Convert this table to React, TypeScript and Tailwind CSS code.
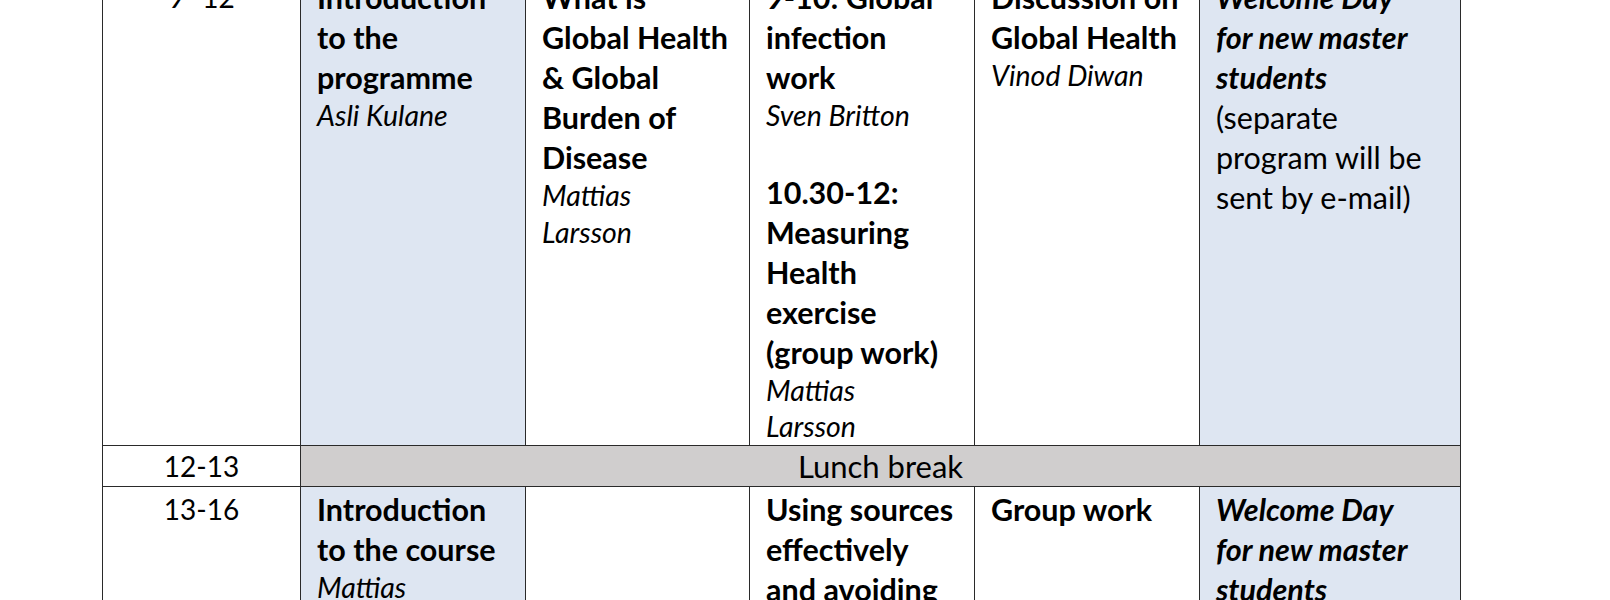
import React from "react";

type Line = { t: string; k: "b" | "i" | "bi" | "r" | "gap" };

const blue = "bg-[#dee6f2]";

function Cell({ lines, shaded, top }: { lines: Line[]; shaded?: boolean; top: string }) {
    return (
        <td className={`border border-[#2a2a2a] align-top ${top} pb-0 pl-[16px] pr-[6px] ${shaded ? blue : "bg-white"}`}>
            {lines.map((l, i) => {
                if (l.k === "gap") return <div key={i} className="h-[38px]" />;
                if (l.k === "i")
                    return (
                        <div key={i} className="italic font-normal text-[28.5px] leading-[36.5px] whitespace-nowrap">
                            {l.t}
                        </div>
                    );
                return (
                    <div
                        key={i}
                        className={`text-[30.5px] leading-[40px] whitespace-nowrap ${l.k === "r" ? "font-normal" : "font-bold"} ${l.k === "bi" ? "italic" : ""}`}
                    >
                        {l.t}
                    </div>
                );
            })}
        </td>
    );
}

const b = (t: string): Line => ({ t, k: "b" });
const it = (t: string): Line => ({ t, k: "i" });
const bi = (t: string): Line => ({ t, k: "bi" });
const r = (t: string): Line => ({ t, k: "r" });
const gap: Line = { t: "", k: "gap" };

export default function App() {
    return (
        <div className="h-[600px] w-[1610px] overflow-hidden bg-white text-black font-['Lato',sans-serif]">
            <table className="-mt-[28px] ml-[102px] border-collapse table-fixed w-[1358px]">
                <colgroup>
                    <col className="w-[198px]" />
                    <col className="w-[225px]" />
                    <col className="w-[224px]" />
                    <col className="w-[225px]" />
                    <col className="w-[225px]" />
                    <col className="w-[261px]" />
                </colgroup>
                <tbody>
                    <tr>
                        <td className="border border-[#2a2a2a] align-top pt-[4px] text-center text-[28px] leading-[40px] bg-white">
                            9 -12
                        </td>
                        <Cell top="pt-[4px]" shaded lines={[b("Introduction"), b("to the"), b("programme"), it("Asli Kulane")]} />
                        <Cell
                            top="pt-[4px]"
                            lines={[
                                b("What is"),
                                b("Global Health"),
                                b("& Global"),
                                b("Burden of"),
                                b("Disease"),
                                it("Mattias"),
                                it("Larsson"),
                            ]}
                        />
                        <Cell
                            top="pt-[4px]"
                            lines={[
                                b("9-10: Global"),
                                b("infection"),
                                b("work"),
                                it("Sven Britton"),
                                gap,
                                b("10.30-12:"),
                                b("Measuring"),
                                b("Health"),
                                b("exercise"),
                                b("(group work)"),
                                it("Mattias"),
                                it("Larsson"),
                            ]}
                        />
                        <Cell top="pt-[4px]" lines={[b("Discussion on"), b("Global Health"), it("Vinod Diwan")]} />
                        <Cell
                            top="pt-[4px]"
                            shaded
                            lines={[
                                bi("Welcome Day"),
                                bi("for new master"),
                                bi("students"),
                                r("(separate"),
                                r("program will be"),
                                r("sent by e-mail)"),
                            ]}
                        />
                    </tr>
                    <tr>
                        <td className="border border-[#2a2a2a] text-center text-[28px] leading-[40px] bg-white">12-13</td>
                        <td colSpan={5} className="border border-[#2a2a2a] bg-[#d0cece] text-center text-[31px] leading-[40px]">
                            Lunch break
                        </td>
                    </tr>
                    <tr>
                        <td className="border border-[#2a2a2a] align-top pt-[2px] text-center text-[28px] leading-[40px] bg-white">
                            13-16
                        </td>
                        <Cell top="pt-[2px]" shaded lines={[b("Introduction"), b("to the course"), it("Mattias"), it("Larsson")]} />
                        <Cell top="pt-[2px]" lines={[]} />
                        <Cell top="pt-[2px]" lines={[b("Using sources"), b("effectively"), b("and avoiding"), b("plagiarism")]} />
                        <Cell top="pt-[2px]" lines={[b("Group work")]} />
                        <Cell top="pt-[2px]" shaded lines={[bi("Welcome Day"), bi("for new master"), bi("students")]} />
                    </tr>
                </tbody>
            </table>
        </div>
    );
}
